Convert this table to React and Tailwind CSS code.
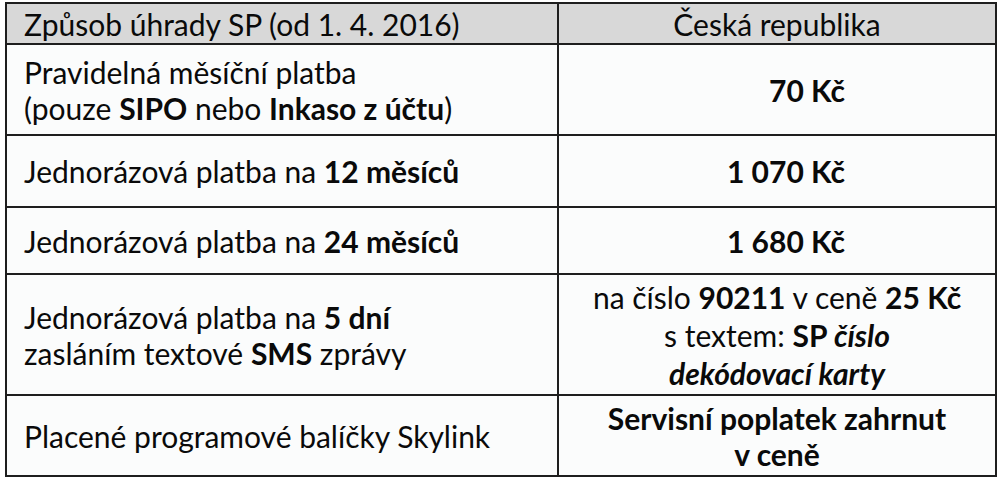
import React from 'react';

// Tabulka: způsoby úhrady servisního poplatku
const rows = [
    {
        h: 'h-[91px]',
        left: (
            <>
                Pravidelná měsíční platba
                <br />
                (pouze <b>SIPO</b> nebo <b>Inkaso z účtu</b>)
            </>
        ),
        right: <b>70 Kč</b>,
        amount: true,
    },
    {
        h: 'h-[72px]',
        left: (
            <>
                Jednorázová platba na <b>12 měsíců</b>
            </>
        ),
        right: <b>1 070 Kč</b>,
        amount: true,
    },
    {
        h: 'h-[67px]',
        left: (
            <>
                Jednorázová platba na <b>24 měsíců</b>
            </>
        ),
        right: <b>1 680 Kč</b>,
        amount: true,
    },
    {
        h: 'h-[121px]',
        left: (
            <>
                Jednorázová platba na <b>5 dní</b>
                <br />
                zasláním textové <b>SMS</b> zprávy
            </>
        ),
        right: (
            <span className="leading-[38px]">
                na číslo <b>90211</b> v ceně <b>25 Kč</b>
                <br />
                s textem: <b>SP <i>číslo</i></b>
                <br />
                <b><i>dekódovací karty</i></b>
            </span>
        ),
    },
    {
        h: 'h-[79px]',
        left: <>Placené programové balíčky Skylink</>,
        right: (
            <b>
                Servisní poplatek zahrnut
                <br />
                v ceně
            </b>
        ),
        last: true,
    },
];

const App = () => {
    return (
        <div
            className="w-[1000px] h-[482px] bg-white pt-[2px] pl-[5px] text-[#0a0a0a]"
            style={{ fontFamily: 'Lato, "Open Sans", sans-serif' }}
        >
            <div className="w-[992px] border-2 border-[#1e1e1e] bg-[#fbfcfc] text-[30px] leading-[36px]">
                {/* Header */}
                <div className="flex h-[41px] bg-[#d8d8d8] border-b-2 border-[#1e1e1e]">
                    <div className="w-[552px] border-r-2 border-[#1e1e1e] pl-[17px] flex items-center">
                        Způsob úhrady SP (od 1. 4. 2016)
                    </div>
                    <div className="flex-1 flex items-center justify-center">
                        Česká republika
                    </div>
                </div>

                {rows.map((row, i) => (
                    <div
                        key={i}
                        className={`flex ${row.h} ${row.last ? '' : 'border-b-2 border-[#1e1e1e]'}`}
                    >
                        <div className="w-[552px] border-r-2 border-[#1e1e1e] pl-[17px] flex items-center">
                            <div>{row.left}</div>
                        </div>
                        {row.amount ? (
                            <div className="flex-1 flex items-center justify-end pr-[150px]">
                                {row.right}
                            </div>
                        ) : (
                            <div className="flex-1 flex items-center justify-center text-center">
                                <div>{row.right}</div>
                            </div>
                        )}
                    </div>
                ))}
            </div>
        </div>
    );
};

export default App;
